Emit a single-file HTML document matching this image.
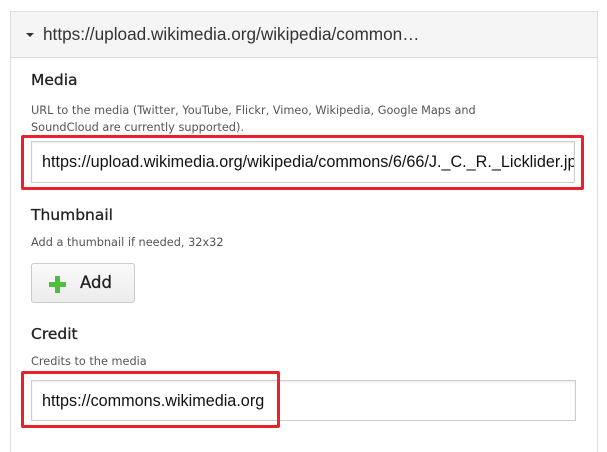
<!DOCTYPE html>
<html><head><style>
body{margin:0;width:607px;height:442px;background:#fff;position:relative;overflow:hidden;font-family:"DejaVu Sans","Liberation Sans",sans-serif;}
.panel{position:absolute;left:10px;top:11px;width:586px;height:440px;border:1px solid #ddd;border-bottom:none;}
.hdr{height:45px;background:#f5f5f5;border-bottom:1px solid #ddd;}
.caret{position:absolute;left:15px;top:21px;width:0;height:0;border-left:4px solid transparent;border-right:4px solid transparent;border-top:4px solid #333;}
.a{position:absolute;}
.lbl{font-size:15.5px;color:#222;-webkit-text-stroke:0.3px #222;}
.help{font-size:11.3px;color:#555;line-height:17px;}
.inp{background:#fff;border:1px solid #ccc;box-shadow:inset 0 1px 2px rgba(0,0,0,.08);font-family:"Liberation Sans",sans-serif;font-size:16.2px;color:#111;white-space:nowrap;overflow:hidden;box-sizing:border-box;padding:11px 0 0 10px;}
.red{border:3px solid #e8212b;border-radius:2px;box-sizing:border-box;}
.btn{border:1px solid #ccc;border-radius:3px;background:linear-gradient(#fafafa,#ececec);box-sizing:border-box;}
</style></head><body>
<div class="panel"><div class="hdr"></div><div class="caret"></div><span style="position:absolute;left:32px;top:12px;font-family:'Liberation Sans',sans-serif;font-size:17.2px;color:#333">https://upload.wikimedia.org/wikipedia/common…</span></div>
<div class="a lbl" style="left:31px;top:71px">Media</div>
<div class="a help" style="left:31px;top:102px;width:490px">URL to the media (Twitter, YouTube, Flickr, Vimeo, Wikipedia, Google Maps and SoundCloud are currently supported).</div>
<div class="a inp" style="left:31px;top:141px;width:544px;height:42px">https://upload.wikimedia.org/wikipedia/commons/6/66/J._C._R._Licklider.jpg</div>
<div class="a red" style="left:21px;top:135px;width:563px;height:55px"></div>
<div class="a lbl" style="left:31px;top:206px">Thumbnail</div>
<div class="a help" style="left:31px;top:234px">Add a thumbnail if needed, 32x32</div>
<div class="a btn" style="left:31px;top:263px;width:104px;height:40px">
<div class="a" style="left:17px;top:18px;width:17px;height:5px;background:#4cbf3f"></div>
<div class="a" style="left:23px;top:12px;width:5px;height:17px;background:#4cbf3f"></div>
<div class="a" style="left:48px;top:9px;font-size:16.5px;color:#222;-webkit-text-stroke:0.3px #222">Add</div>
</div>
<div class="a lbl" style="left:31px;top:325px">Credit</div>
<div class="a help" style="left:31px;top:353px">Credits to the media</div>
<div class="a inp" style="left:31px;top:380px;width:545px;height:41px">https://commons.wikimedia.org</div>
<div class="a red" style="left:21px;top:371px;width:259px;height:57px"></div>
</body></html>
